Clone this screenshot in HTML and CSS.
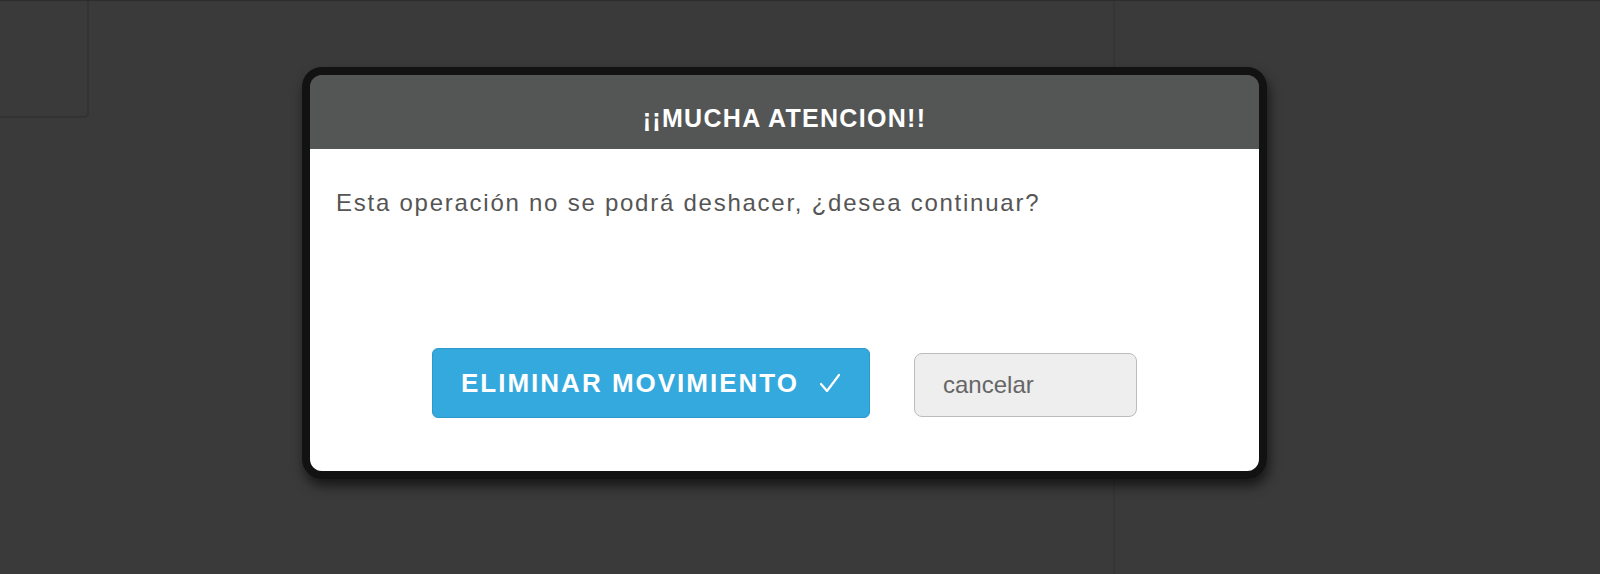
FILE: index.html
```html
<!DOCTYPE html>
<html lang="es">
<head>
    <meta charset="UTF-8">
    <title>Atención</title>
    <link rel="stylesheet" href="styles.css">
</head>
<body>
    <div class="page">
        <div class="main-col">
            <div class="card"></div>
        </div>
        <div class="side-col"></div>
    </div>

    <!-- Ventana de confirmación -->
    <div class="modal">
        <div class="modal-header">¡¡MUCHA ATENCION!!</div>
        <div class="modal-body">
            <p class="message">Esta operación no se podrá deshacer, ¿desea continuar?</p>
            <div class="modal-actions">
                <button class="btn btn-danger">
                    <span>ELIMINAR MOVIMIENTO</span>
                    <svg class="check" width="22" height="22" viewBox="0 0 22 22">
                        <polyline points="2,12 8,19 20,3" fill="none" stroke="#fff" stroke-width="2.2" stroke-linecap="round" stroke-linejoin="round"/>
                    </svg>
                </button>
                <button class="btn btn-cancel">cancelar</button>
            </div>
        </div>
    </div>
</body>
</html>
```

FILE: styles.css
```css
* {
    margin: 0;
    padding: 0;
    box-sizing: border-box;
}
body {
    width: 1600px;
    height: 574px;
    overflow: hidden;
    background: #3a3a3a;
    font-family: "Liberation Sans", Arial, sans-serif;
}
.page {
    display: flex;
    height: 574px;
    border-top: 1px solid #2c2c2c;
}
.main-col {
    width: 1113px;
}
.card {
    width: 89px;
    height: 117px;
    border-right: 2px solid #333;
    border-bottom: 2px solid #333;
    border-bottom-right-radius: 5px;
}
.side-col {
    flex: 1;
    border-left: 2px solid #353535;
}
/* Ventana modal */
.modal {
    position: absolute;
    top: 67px;
    left: 302px;
    width: 965px;
    border: 8px solid #121212;
    border-radius: 20px;
    overflow: hidden;
    box-shadow: 2px 7px 12px rgba(0, 0, 0, 0.6);
}
.modal-header {
    height: 74px;
    padding-top: 12px;
    display: flex;
    justify-content: center;
    align-items: center;
    background: #545655;
    color: #fff;
    font-size: 25px;
    font-weight: bold;
    letter-spacing: 1.3px;
}
.modal-body {
    background: #fff;
    padding: 40px 26px 53px;
}
.message {
    font-size: 24px;
    line-height: 28px;
    letter-spacing: 1.75px;
    color: #555;
}
.modal-actions {
    margin-top: 131px;
    display: flex;
    justify-content: center;
    align-items: center;
    gap: 44px;
}
.btn {
    font-family: "Liberation Sans", Arial, sans-serif;
    cursor: pointer;
}
.btn-danger {
    width: 438px;
    height: 70px;
    display: flex;
    align-items: center;
    justify-content: center;
    gap: 20px;
    background: #34a9dd;
    border: 1px solid #2b9acb;
    border-radius: 6px;
    color: #fff;
    font-size: 26px;
    font-weight: bold;
    letter-spacing: 2px;
}
.btn-cancel {
    width: 223px;
    height: 64px;
    margin-top: 4px;
    padding-left: 28px;
    text-align: left;
    background: #eee;
    border: 1px solid #bcbcbc;
    border-radius: 8px;
    color: #666;
    font-size: 24px;
}
```
